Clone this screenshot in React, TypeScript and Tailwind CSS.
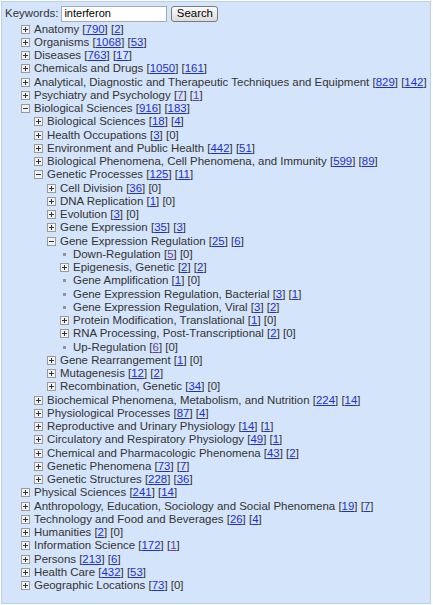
import React from 'react';

interface Node {
  label: string;
  a: string;
  b: string;
  av?: boolean;
  bv?: boolean;
  open?: boolean;
  leaf?: boolean;
  kids?: Node[];
}

const tree: Node[] = [
  { label: 'Anatomy', a: '790', b: '2' },
  { label: 'Organisms', a: '1068', b: '53' },
  { label: 'Diseases', a: '763', b: '17' },
  { label: 'Chemicals and Drugs', a: '1050', b: '161' },
  { label: 'Analytical, Diagnostic and Therapeutic Techniques and Equipment', a: '829', b: '142' },
  { label: 'Psychiatry and Psychology', a: '7', b: '1', av: true, bv: true },
  {
    label: 'Biological Sciences', a: '916', b: '183', open: true,
    kids: [
      { label: 'Biological Sciences', a: '18', b: '4' },
      { label: 'Health Occupations', a: '3', b: '0' },
      { label: 'Environment and Public Health', a: '442', b: '51' },
      { label: 'Biological Phenomena, Cell Phenomena, and Immunity', a: '599', b: '89' },
      {
        label: 'Genetic Processes', a: '125', b: '11', open: true,
        kids: [
          { label: 'Cell Division', a: '36', b: '0' },
          { label: 'DNA Replication', a: '1', b: '0' },
          { label: 'Evolution', a: '3', b: '0' },
          { label: 'Gene Expression', a: '35', b: '3' },
          {
            label: 'Gene Expression Regulation', a: '25', b: '6', open: true,
            kids: [
              { label: 'Down-Regulation', a: '5', b: '0', leaf: true, av: true },
              { label: 'Epigenesis, Genetic', a: '2', b: '2' },
              { label: 'Gene Amplification', a: '1', b: '0', leaf: true },
              { label: 'Gene Expression Regulation, Bacterial', a: '3', b: '1', leaf: true },
              { label: 'Gene Expression Regulation, Viral', a: '3', b: '2', leaf: true },
              { label: 'Protein Modification, Translational', a: '1', b: '0' },
              { label: 'RNA Processing, Post-Transcriptional', a: '2', b: '0' },
              { label: 'Up-Regulation', a: '6', b: '0', leaf: true, av: true },
            ],
          },
          { label: 'Gene Rearrangement', a: '1', b: '0' },
          { label: 'Mutagenesis', a: '12', b: '2' },
          { label: 'Recombination, Genetic', a: '34', b: '0' },
        ],
      },
      { label: 'Biochemical Phenomena, Metabolism, and Nutrition', a: '224', b: '14' },
      { label: 'Physiological Processes', a: '87', b: '4' },
      { label: 'Reproductive and Urinary Physiology', a: '14', b: '1' },
      { label: 'Circulatory and Respiratory Physiology', a: '49', b: '1' },
      { label: 'Chemical and Pharmacologic Phenomena', a: '43', b: '2' },
      { label: 'Genetic Phenomena', a: '73', b: '7' },
      { label: 'Genetic Structures', a: '228', b: '36' },
    ],
  },
  { label: 'Physical Sciences', a: '241', b: '14' },
  { label: 'Anthropology, Education, Sociology and Social Phenomena', a: '19', b: '7' },
  { label: 'Technology and Food and Beverages', a: '26', b: '4' },
  { label: 'Humanities', a: '2', b: '0' },
  { label: 'Information Science', a: '172', b: '1', bv: true },
  { label: 'Persons', a: '213', b: '6' },
  { label: 'Health Care', a: '432', b: '53' },
  { label: 'Geographic Locations', a: '73', b: '0' },
];

function Toggle({ open, leaf }: { open?: boolean; leaf?: boolean }) {
  if (leaf) {
    return (
      <span className="w-[9px] h-[9px] flex items-center justify-center shrink-0">
        <span className="w-[3px] h-[3px] bg-[#8a94a4]" />
      </span>
    );
  }
  return (
    <svg width="9" height="9" viewBox="0 0 9 9" className="shrink-0">
      <rect x="0.5" y="0.5" width="8" height="8" fill="#f2f2f2" stroke="#9a9a9a" />
      <path d="M2 4.5h5" stroke="#333" />
      {!open && <path d="M4.5 2v5" stroke="#333" />}
    </svg>
  );
}

function Count({ n, visited }: { n: string; visited?: boolean }) {
  if (n === '0') return <>[0]</>;
  return (
    <>
      [<a href="#" className={`underline ${visited ? 'text-[#6a3fa0]' : 'text-[#1f2fcf]'}`}>{n}</a>]
    </>
  );
}

function Branch({ nodes, depth }: { nodes: Node[]; depth: number }) {
  return (
    <>
      {nodes.map((n, i) => (
        <React.Fragment key={depth + '-' + i}>
          <div className="flex items-center h-[13.25px] whitespace-nowrap" style={{ paddingLeft: depth * 13 }}>
            <Toggle open={n.open} leaf={n.leaf} />
            <span className="ml-[4px]">
              {n.label} <Count n={n.a} visited={n.av} /> <Count n={n.b} visited={n.bv} />
            </span>
          </div>
          {n.open && n.kids && <Branch nodes={n.kids} depth={depth + 1} />}
        </React.Fragment>
      ))}
    </>
  );
}

export default function App() {
  return (
    <div className="w-[433px] h-[605px] bg-white p-[1px] font-['Liberation_Sans',Arial,sans-serif] text-[11.45px] text-[#333]">
      <div className="w-[430px] h-[603px] bg-[#d4e4fb] border border-[#bccfe8] pt-[3px] pl-[3px]">
        <div className="flex items-center h-[17px]">
          <span>Keywords:</span>
          <input
            type="text"
            defaultValue="interferon"
            className="ml-[3px] w-[106px] h-[16px] bg-white border border-[#a5acb5] px-[2px] text-[11px] text-black outline-none"
          />
          <button className="ml-[4px] w-[47px] h-[16px] rounded-[3px] border border-[#7a7a7a] bg-gradient-to-b from-[#fbfbfb] to-[#dcdcdc] text-[11.4px] text-black leading-none">
            Search
          </button>
        </div>
        <div className="mt-[0.5px] pl-[16px]">
          <Branch nodes={tree} depth={0} />
        </div>
      </div>
    </div>
  );
}
